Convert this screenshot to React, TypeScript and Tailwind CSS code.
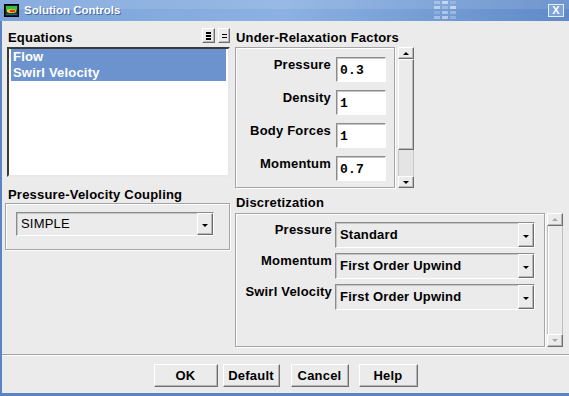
import React from 'react';

const raised =
  'border border-t-white border-l-white border-r-[#6e6e6e] border-b-[#6e6e6e] shadow-[inset_-1px_-1px_0_#b8b8b8]';
const sunken =
  'border border-t-[#8c8c8c] border-l-[#8c8c8c] border-r-white border-b-white shadow-[inset_1px_1px_0_#c4c4c4]';
const group = 'border border-[#a4a4a4] shadow-[inset_1px_1px_0_#ffffff,1px_1px_0_#ffffff]';

function Arrow({ up = false, disabled = false }: { up?: boolean; disabled?: boolean }) {
  const color = disabled ? 'border-t-[#a8a8a8]' : 'border-t-black';
  const colorUp = disabled ? 'border-b-[#a8a8a8]' : 'border-b-black';
  return up ? (
    <div className={`w-0 h-0 border-l-[3px] border-r-[3px] border-b-[3px] border-l-transparent border-r-transparent ${colorUp}`} />
  ) : (
    <div className={`w-0 h-0 border-l-[3px] border-r-[3px] border-t-[3px] border-l-transparent border-r-transparent ${color}`} />
  );
}

function Dropdown({ value, w, h, bold = true }: { value: string; w: string; h: string; bold?: boolean }) {
  return (
    <div className={`${sunken} ${w} ${h} flex items-stretch bg-[#ebebeb]`}>
      <div className={`flex-1 flex items-center pl-[4px] text-[13px] tracking-[0.2px] text-black ${bold ? 'font-bold' : 'font-normal'}`}>
        {value}
      </div>
      <div className={`${raised} w-[16px] flex items-center justify-center pt-[2px] bg-[#ebebeb]`}>
        <Arrow />
      </div>
    </div>
  );
}

function NumberBox({ value }: { value: string }) {
  return (
    <div className={`${sunken} w-[50px] h-[25px] bg-white flex items-center pl-[3px] pt-[2px] font-['Liberation_Mono',monospace] font-bold text-[13px] text-black`}>
      {value}
    </div>
  );
}

const relaxation = [
  { label: 'Pressure', value: '0.3' },
  { label: 'Density', value: '1' },
  { label: 'Body Forces', value: '1' },
  { label: 'Momentum', value: '0.7' },
];

const discretization = [
  { label: 'Pressure', value: 'Standard' },
  { label: 'Momentum', value: 'First Order Upwind' },
  { label: 'Swirl Velocity', value: 'First Order Upwind' },
];

export default function App() {
  return (
    <div className="w-[569px] h-[396px] flex flex-col overflow-hidden font-['Liberation_Sans',Arial,sans-serif] text-black">
      {/* title bar */}
      <div className="relative h-[21px] flex items-center bg-gradient-to-r from-[#7ba3da] via-[#8cb1e2] to-[#5f8ac8]">
        <div className="absolute inset-x-0 top-0 h-[9px] bg-white/10" />
        <svg className="ml-[4px] relative" width="15" height="13" viewBox="0 0 15 13">
          <rect x="0.5" y="0.5" width="14" height="12" fill="#10202a" stroke="#000" />
          <rect x="2" y="2" width="11" height="4" fill="#2fc24a" />
          <ellipse cx="7.5" cy="7" rx="5" ry="2" fill="#f0d020" />
          <ellipse cx="8.5" cy="7" rx="3" ry="1.2" fill="#e2321e" />
          <rect x="2" y="9.5" width="11" height="1.5" fill="#137070" />
        </svg>
        <span className="relative ml-[5px] text-[11.5px] font-bold text-white [text-shadow:1px_1px_0_#45679b]">
          Solution Controls
        </span>
        <div className="absolute left-[434px] top-[1px] grid grid-cols-3 gap-[2px] opacity-60">
          {[0.5, 0.9, 0.3, 0.8, 0.4, 0.9, 0.3, 0.7, 0.5, 0.6, 0.8, 0.4].map((o, i) => (
            <div key={i} className="w-[6px] h-[3px] bg-white" style={{ opacity: o }} />
          ))}
        </div>
        <div className="absolute right-[5px] top-[4px] w-[16px] h-[13px] border border-white/80 bg-[#7da3d9] flex items-center justify-center text-white text-[11px] font-bold leading-none">
          X
        </div>
      </div>

      {/* body */}
      <div className="flex-1 flex flex-col bg-[#ebebeb] border-l-2 border-b-[3px] border-[#5b84c4] tracking-[0.2px]">
        <div className="h-[333px] flex pl-[3px]">
          {/* left column */}
          <div className="w-[225px] flex flex-col">
            <div className="mt-[7px] h-[15px] flex justify-between">
              <span className="mt-[2px] ml-[3px] text-[13px] font-bold leading-[15px]">Equations</span>
              <div className="flex gap-[3px]">
                <div className={`${raised} w-[13px] h-[15px] bg-[#ebebeb] flex flex-col items-center justify-center gap-[1px]`}>
                  <div className="w-[5px] h-[2px] bg-black" />
                  <div className="w-[5px] h-[2px] bg-black" />
                  <div className="w-[5px] h-[2px] bg-black" />
                </div>
                <div className={`${raised} w-[12px] h-[15px] bg-[#ebebeb] flex flex-col items-center justify-center gap-[2px]`}>
                  <div className="w-[5px] h-[1px] bg-black" />
                  <div className="w-[5px] h-[1px] bg-black" />
                </div>
              </div>
            </div>
            <div className="mt-[4px] ml-[2px] w-[223px] h-[130px] bg-white border-2 border-t-[#3a3a3a] border-l-[#3a3a3a] border-r-[#e8e8e8] border-b-[#e8e8e8] px-[2px]">
              {['Flow', 'Swirl Velocity'].map((item) => (
                <div key={item} className="h-[16px] bg-[#6c93cd] text-white text-[13px] font-bold leading-[16px] pl-[2px]">
                  {item}
                </div>
              ))}
            </div>
            <span className="mt-[10px] ml-[3px] text-[13px] font-bold leading-[15px]">Pressure-Velocity Coupling</span>
            <div className={`${group} mt-[1px] h-[47px] pt-[8px] pl-[10px]`}>
              <Dropdown value="SIMPLE" w="w-[198px]" h="h-[24px]" bold={false} />
            </div>
          </div>

          {/* right column */}
          <div className="ml-[5px] flex flex-col">
            <span className="mt-[9px] ml-[1px] text-[13px] font-bold leading-[15px]">Under-Relaxation Factors</span>
            <div className="mt-[2px] flex">
              <div className={`${group} w-[160px] h-[141px] pt-[9px] flex flex-col gap-[8px]`}>
                {relaxation.map((r) => (
                  <div key={r.label} className="flex items-start h-[25px]">
                    <span className="w-[95px] text-right text-[13px] font-bold leading-[15px]">{r.label}</span>
                    <div className="ml-[5px]">
                      <NumberBox value={r.value} />
                    </div>
                  </div>
                ))}
              </div>
              <div className="ml-[3px] w-[16px] h-[141px] flex flex-col">
                <div className={`${raised} h-[12px] flex items-center justify-center bg-[#ebebeb]`}>
                  <Arrow up />
                </div>
                <div className={`${raised} h-[91px] bg-[#ebebeb]`} />
                <div className="flex-1 bg-[#e4e4e4] border-l border-r border-[#c8c8c8]" />
                <div className={`${raised} h-[12px] flex items-center justify-center bg-[#ebebeb]`}>
                  <Arrow />
                </div>
              </div>
            </div>

            <span className="mt-[7px] ml-[1px] text-[13px] font-bold leading-[15px]">Discretization</span>
            <div className="mt-[3px] flex">
              <div className={`${group} w-[310px] h-[134px] pt-[8px] flex flex-col gap-[5px]`}>
                {discretization.map((d) => (
                  <div key={d.label} className="flex items-start">
                    <span className="w-[96px] text-right text-[13px] font-bold leading-[15px]">{d.label}</span>
                    <div className="ml-[3px]">
                      <Dropdown value={d.value} w="w-[200px]" h="h-[26px]" />
                    </div>
                  </div>
                ))}
              </div>
              <div className="ml-[2px] w-[16px] h-[134px] flex flex-col">
                <div className={`${raised} h-[13px] flex items-center justify-center bg-[#ebebeb]`}>
                  <Arrow up disabled />
                </div>
                <div className="flex-1 bg-[#ebebeb] border-l border-r border-[#c0c0c0] shadow-[inset_1px_0_0_#ffffff]" />
                <div className={`${raised} h-[13px] flex items-center justify-center bg-[#ebebeb]`}>
                  <Arrow disabled />
                </div>
              </div>
            </div>
          </div>
        </div>

        {/* separator */}
        <div className="h-[2px] border-t border-t-[#a4a4a4] border-b border-b-white" />

        {/* buttons */}
        <div className="pt-[8px] flex justify-center">
          {[
            { label: 'OK', w: 'w-[64px]', ml: 'ml-0' },
            { label: 'Default', w: 'w-[57px]', ml: 'ml-[5px]' },
            { label: 'Cancel', w: 'w-[58px]', ml: 'ml-[11px]' },
            { label: 'Help', w: 'w-[59px]', ml: 'ml-[10px]' },
          ].map((b) => (
            <div
              key={b.label}
              className={`${raised} ${b.w} ${b.ml} h-[23px] bg-[#ebebeb] flex items-center justify-center text-[13px] font-bold`}
            >
              {b.label}
            </div>
          ))}
        </div>
      </div>
    </div>
  );
}
